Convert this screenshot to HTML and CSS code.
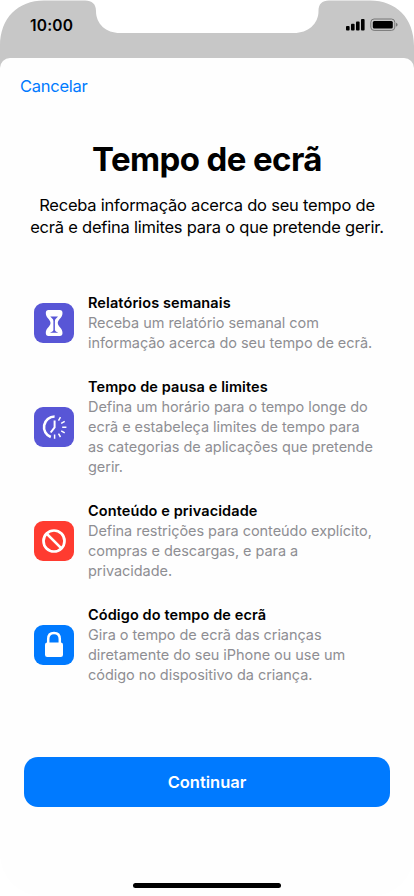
FILE: index.html
```html
<!DOCTYPE html>
<html lang="pt">
<head>
    <meta charset="UTF-8" />
    <meta name="viewport" content="width=device-width, initial-scale=1.0" />
    <title>Tempo de ecrã</title>
    <link rel="stylesheet" href="styles.css">
</head>
<body>
    <div class="phone">
        <svg class="bezel" viewBox="0 0 414 72">
            <path d="M0 72V46C0 18 18 0.5 44 0.5H85C92 0.5 96 4 96 11C96 24 106 33 120 33H294C308 33 318.500 24 318.500 11C318.500 4 322 0.500 329 0.500H370C396 0.500 414 18 414 46V72Z" />
        </svg>
        <div class="status">
            <span class="clock">10:00</span>
            <svg class="indicators" viewBox="0 0 52 14">
                <rect x="0" y="8" width="3.600" height="4.500" rx="0.900" />
                <rect x="5" y="5.800" width="3.600" height="6.700" rx="0.900" />
                <rect x="10" y="3.500" width="3.600" height="9" rx="0.900" />
                <rect x="15" y="1" width="3.600" height="11.500" rx="0.900" />
                <rect class="battery" x="24.800" y="1" width="24" height="11.400" rx="3.300" />
                <rect x="26.800" y="3" width="20" height="7.400" rx="1.500" />
                <path class="cap" d="M50 4.800Q51.600 5.200 51.600 6.700Q51.600 8.200 50 8.600Z" />
            </svg>
        </div>

        <div class="sheet">
            <a class="cancel">Cancelar</a>
            <h1>Tempo de ecrã</h1>
            <p class="subtitle">Receba informação acerca do seu tempo de<br>ecrã e defina limites para o que pretende gerir.</p>

            <div class="features">
                <div class="feature">
                    <svg class="icon purple" viewBox="0 0 40 40">
                        <path class="solid" d="M14.500 7H25.800Q28.500 7 28.500 10C28.500 15 23.800 16.500 23.800 20C23.800 23.500 28.500 25 28.500 30Q28.500 33 25.800 33H14.500Q11.800 33 11.800 30C11.800 25 16.500 23.500 16.500 20C16.500 16.500 11.800 15 11.800 10Q11.800 7 14.500 7Z" />
                        <path class="sand" d="M16.300 13.600H24C23 15.200 20.900 16 20.900 18V27.300Q21.200 28.400 24.300 29.800H16Q19.100 28.400 19.400 27.300V18C19.400 16 17.300 15.200 16.300 13.600Z" />
                    </svg>
                    <div class="copy">
                        <h2>Relatórios semanais</h2>
                        <p>Receba um relatório semanal com<br>informação acerca do seu tempo de ecrã.</p>
                    </div>
                </div>
                <div class="feature">
                    <svg class="icon purple" viewBox="0 0 40 40">
                        <path class="line" stroke-width="2.600" d="M20.600 9.500A10.600 10.600 0 0 0 16.800 30" />
                        <path class="line" stroke-width="2" d="M20.600 13.500V20.300L16.700 25.500" />
                        <path class="line" stroke-width="1.500" d="M24.500 13.600L26.500 10.200M27.200 16.300L30.700 14.300M28.200 20.200H32.400M27.200 23.900L30.700 25.900M24.500 26.600L26.500 30M20.600 27.500V31.700" />
                    </svg>
                    <div class="copy">
                        <h2>Tempo de pausa e limites</h2>
                        <p>Defina um horário para o tempo longe do<br>ecrã e estabeleça limites de tempo para<br>as categorias de aplicações que pretende<br>gerir.</p>
                    </div>
                </div>
                <div class="feature">
                    <svg class="icon red" viewBox="0 0 40 40">
                        <circle class="line" stroke-width="2.700" cx="20" cy="20" r="10.500" />
                        <path class="line" stroke-width="2.700" d="M12.600 12.600L27.400 27.400" />
                    </svg>
                    <div class="copy">
                        <h2>Conteúdo e privacidade</h2>
                        <p>Defina restrições para conteúdo explícito,<br>compras e descargas, e para a<br>privacidade.</p>
                    </div>
                </div>
                <div class="feature">
                    <svg class="icon blue" viewBox="0 0 40 40">
                        <rect class="solid" x="11" y="17.500" width="18" height="14.500" rx="2.200" />
                        <path class="line" stroke-width="2.500" d="M14.200 19V14C14.200 10 16.600 7.900 20 7.900S25.800 10 25.800 14V19" />
                    </svg>
                    <div class="copy">
                        <h2>Código do tempo de ecrã</h2>
                        <p>Gira o tempo de ecrã das crianças<br>diretamente do seu iPhone ou use um<br>código no dispositivo da criança.</p>
                    </div>
                </div>
            </div>

            <button>Continuar</button>
            <div class="home-bar"></div>
        </div>
    </div>
</body>
</html>
```
FILE: styles.css
```css
* {
    box-sizing: border-box;
}
body {
    margin: 0;
    background: #fff;
    font-family: Inter, sans-serif;
    color: #000;
}
h1, h2, p {
    margin: 0;
}
.phone {
    position: relative;
    width: 414px;
    height: 896px;
    display: flex;
    flex-direction: column;
    overflow: hidden;
}
/* grey screen outline with the notch, behind the content */
.bezel {
    position: absolute;
    top: 0;
    left: 0;
    width: 414px;
    height: 72px;
    fill: #c7c7c7;
}
.status {
    position: relative;
    display: flex;
    justify-content: space-between;
    height: 58px;
    padding: 16px 16px 0 30px;
}
.clock {
    font-size: 15.5px;
    font-weight: 600;
    line-height: 20px;
    letter-spacing: 0.2px;
}
.indicators {
    width: 52px;
    height: 14px;
    margin-top: 2px;
}
.battery {
    fill: none;
    stroke: #777;
    stroke-width: 1;
}
.cap {
    fill: #777;
}
.sheet {
    position: relative;
    flex: 1;
    display: flex;
    flex-direction: column;
    align-items: center;
    background: #fefefe;
    border-radius: 10px 10px 42px 42px;
}
.cancel {
    align-self: flex-start;
    margin: 18px 0 0 20px;
    font-size: 16.5px;
    line-height: 20px;
    letter-spacing: -0.25px;
    color: #007aff;
}
h1 {
    margin-top: 43px;
    font-size: 33px;
    font-weight: 700;
    line-height: 40px;
    letter-spacing: -0.6px;
}
.subtitle {
    margin-top: 15px;
    font-size: 16.5px;
    line-height: 22px;
    letter-spacing: -0.23px;
    text-align: center;
    white-space: nowrap;
}
.features {
    align-self: stretch;
    display: flex;
    flex-direction: column;
    gap: 24px;
    margin-top: 55px;
    padding: 0 34px;
}
.feature {
    display: flex;
    align-items: center;
    gap: 14px;
}
.icon {
    flex: none;
    width: 40px;
    height: 40px;
    border-radius: 9px;
}
.purple {
    background: #5856d6;
}
.red {
    background: #ff3b30;
}
.blue {
    background: #007aff;
}
.solid {
    fill: #fff;
}
.sand {
    fill: #5856d6;
}
.line {
    fill: none;
    stroke: #fff;
}
.copy {
    white-space: nowrap;
    font-size: 14.5px;
    line-height: 20px;
}
h2 {
    font-size: 14.5px;
    font-weight: 600;
    line-height: 20px;
    letter-spacing: 0.1px;
}
.copy p {
    color: #8e8e93;
    letter-spacing: -0.05px;
}
button {
    width: 366px;
    height: 50px;
    margin-top: 72px;
    padding: 0;
    border: none;
    border-radius: 14px;
    background: #007aff;
    color: #fff;
    font-family: inherit;
    font-size: 16.5px;
    font-weight: 600;
}
.home-bar {
    width: 148px;
    height: 5px;
    margin-top: 76px;
    border-radius: 3px;
    background: #000;
}
```
